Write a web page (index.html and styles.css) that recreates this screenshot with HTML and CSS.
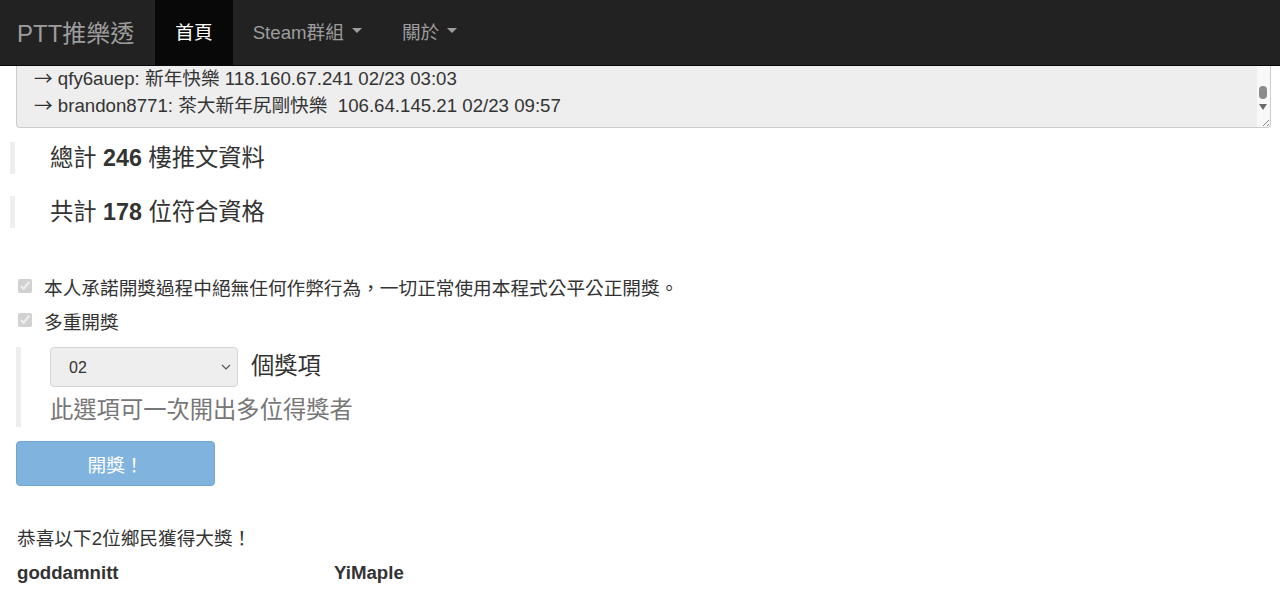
FILE: index.html
```html
<!DOCTYPE html>
<html lang="zh-Hant">
<head>
    <meta charset="UTF-8">
    <meta name="viewport" content="width=device-width, initial-scale=1.0">
    <title>PTT推樂透</title>
    <link rel="stylesheet" href="styles.css">
</head>
<body>
    <nav class="navbar">
        <a href="#" class="navbar-brand">PTT推樂透</a>
        <ul class="nav">
            <li class="active"><a href="#">首頁</a></li>
            <li><a href="#">Steam群組 <span class="caret"></span></a></li>
            <li><a href="#">關於 <span class="caret"></span></a></li>
        </ul>
    </nav>

    <div class="container">
        <!-- 推文列表 (已捲動到底) -->
        <div class="push-list">
            <div class="push-lines">
                <div class="push-line"><span class="arrow">→</span> qfy6auep: 新年快樂 118.160.67.241 02/23 03:03</div>
                <div class="push-line"><span class="arrow">→</span> brandon8771: 茶大新年尻剛快樂&nbsp; 106.64.145.21 02/23 09:57</div>
            </div>
            <div class="fake-scroll">
                <span class="thumb"></span>
                <span class="arrow-down"></span>
                <span class="grip"></span>
            </div>
        </div>

        <blockquote class="stat">總計 <b>246</b> 樓推文資料</blockquote>
        <blockquote class="stat">共計 <b>178</b> 位符合資格</blockquote>

        <div class="options">
            <label class="check"><input type="checkbox" checked disabled> 本人承諾開獎過程中絕無任何作弊行為，一切正常使用本程式公平公正開獎。</label>
            <label class="check"><input type="checkbox" checked disabled> 多重開獎</label>
        </div>

        <blockquote class="multi">
            <div class="multi-row">
                <span class="select-wrap">
                    <select class="form-control" disabled>
                        <option>02</option>
                    </select>
                    <svg class="chevron" width="10" height="6" viewBox="0 0 10 6"><path d="M1 1l4 4 4-4" fill="none" stroke="#555" stroke-width="1.2"/></svg>
                </span>
                <span class="multi-label">個獎項</span>
            </div>
            <div class="help">此選項可一次開出多位得獎者</div>
        </blockquote>

        <button class="btn-draw" disabled>開獎！</button>

        <p class="congrats">恭喜以下2位鄉民獲得大獎！</p>
        <div class="winners">
            <div class="winner">goddamnitt</div>
            <div class="winner">YiMaple</div>
        </div>
    </div>
</body>
</html>
```

FILE: styles.css
```css
body {
    margin: 0;
    font-family: "Liberation Sans", "Noto Sans CJK TC", sans-serif;
    font-size: 18.67px;
    color: #333;
    background: #fff;
}
.navbar {
    display: flex;
    align-items: stretch;
    height: 66px;
    background: #222;
    border-bottom: 1px solid #080808;
    box-sizing: border-box;
}
.navbar-brand {
    display: flex;
    align-items: center;
    padding: 0 17px 3px;
    font-size: 24px;
    color: #9d9d9d;
    text-decoration: none;
}
.nav {
    display: flex;
    margin: 0;
    padding: 0 0 0 4px;
    list-style: none;
}
.nav li a {
    display: flex;
    align-items: center;
    height: 100%;
    box-sizing: border-box;
    padding: 0 20px 4px;
    font-size: 18.67px;
    color: #9d9d9d;
    text-decoration: none;
}
.nav li.active a {
    background: #080808;
    color: #fff;
}
.caret {
    display: inline-block;
    width: 0;
    height: 0;
    margin-left: 8px;
    border-top: 5px solid #9d9d9d;
    border-left: 5px solid transparent;
    border-right: 5px solid transparent;
}
.container {
    padding: 0 9px 0 16px;
}
.push-list {
    display: flex;
    height: 61px;
    background: #eee;
    border: 1px solid #ccc;
    border-top: none;
    border-radius: 0 0 4px 4px;
}
.push-lines {
    flex: 1;
    padding: 0 0 0 17px;
    margin-top: -1px;
}
.push-line {
    height: 27px;
    line-height: 27px;
    white-space: nowrap;
}
.arrow {
    font-family: "Noto Sans CJK TC", sans-serif;
    line-height: 1;
}
.fake-scroll {
    position: relative;
    width: 13px;
    background: #f8f8f8;
    border-radius: 0 0 4px 0;
}
.fake-scroll .thumb {
    position: absolute;
    left: 2px;
    top: 20px;
    width: 8px;
    height: 13px;
    border-radius: 4px;
    background: #8a8a8a;
}
.fake-scroll .arrow-down {
    position: absolute;
    left: 2px;
    top: 38px;
    border-top: 6px solid #6a6a6a;
    border-left: 4px solid transparent;
    border-right: 4px solid transparent;
}
.fake-scroll .grip {
    position: absolute;
    right: 1px;
    bottom: 1px;
    width: 6px;
    height: 6px;
    background: linear-gradient(135deg, transparent 45%, #888 45%, #888 55%, transparent 55%, transparent 75%, #888 75%, #888 85%, transparent 85%);
}
blockquote {
    margin: 0;
    border-left: 5px solid #eee;
}
.stat {
    margin: 14px 0 0 -6px;
    padding: 0 0 0 35px;
    height: 32px;
    line-height: 32px;
    font-size: 23.3px;
}
.stat + .stat {
    margin-top: 22px;
}
.options {
    margin-top: 41px;
}
.check {
    display: flex;
    align-items: center;
    height: 34px;
    padding-left: 1px;
}
.check input {
    width: 14px;
    height: 14px;
    margin: 0 12px 0 1px;
}
.multi {
    margin-top: 10px;
    padding: 0 0 0 29px;
    height: 80px;
}
.multi-row {
    display: flex;
    align-items: center;
}
.select-wrap {
    position: relative;
    display: flex;
}
.form-control {
    width: 188px;
    height: 40px;
    padding: 0 18px;
    font-family: inherit;
    font-size: 16px;
    color: #333;
    background-color: #eee;
    border: 1px solid #d4d4d4;
    border-radius: 4px;
    opacity: 1;
    appearance: none;
    -webkit-appearance: none;
}
.chevron {
    position: absolute;
    right: 7px;
    top: 17px;
    pointer-events: none;
}
.multi-label {
    margin: 0 0 6px 13px;
    font-size: 23.3px;
}
.help {
    margin-top: 4px;
    font-size: 23.3px;
    color: #777;
}
.btn-draw {
    display: block;
    margin-top: 14px;
    width: 199px;
    height: 45px;
    font-family: inherit;
    font-size: 18.67px;
    color: #fff;
    background: #80b3dd;
    border: 1px solid #72a6d2;
    border-radius: 4px;
}
.congrats {
    margin: 40px 0 0 1px;
    line-height: 26px;
}
.winners {
    display: grid;
    grid-template-columns: repeat(4, 317px);
    margin-top: 10px;
    padding-left: 1px;
    font-weight: bold;
}
```
